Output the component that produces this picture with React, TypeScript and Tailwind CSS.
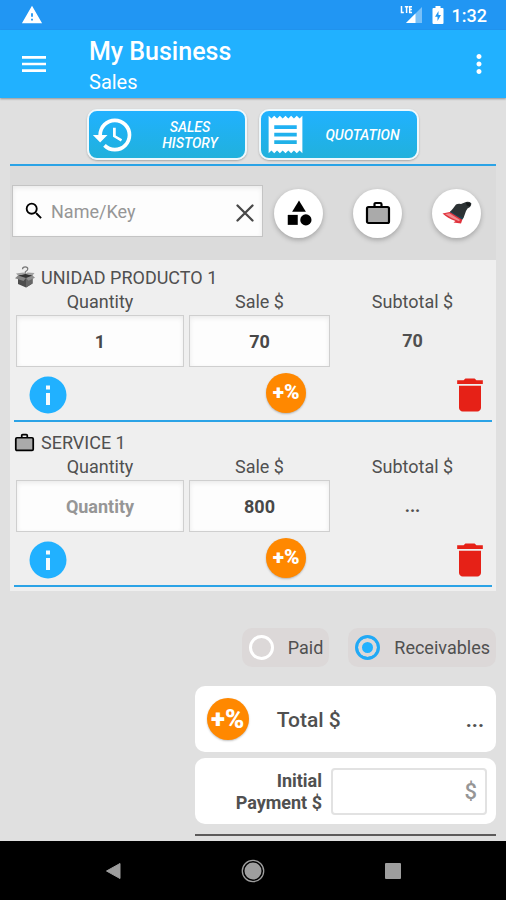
import React, { useState } from "react";
import {
  MdCategory,
  MdDelete,
  MdHistory,
  MdMenu,
  MdMoreVert,
  MdReceipt,
  MdSearch,
  MdWarning,
} from "react-icons/md";

function Briefcase({ className }: { className: string }) {
  return (
    <svg viewBox="0 0 26 24" className={className} aria-hidden="true">
      <rect x="2" y="6" width="22" height="16" rx="1.5" fill="#aaaaaa" stroke="#000" strokeWidth="2.2" />
      <path d="M9.5 6V3.2q0-1.2 1.2-1.2h4.6q1.2 0 1.2 1.2V6" fill="none" stroke="#000" strokeWidth="2.2" />
    </svg>
  );
}

function OpenBox({ className }: { className: string }) {
  return (
    <svg viewBox="0 0 20 22" className={className} aria-hidden="true">
      <path d="M7.500 3.200Q7.600.9 10.200.9T12.800 3Q12.700 4.400 11 5.200Q10 5.800 10 7.500V10" fill="none" stroke="#777" strokeWidth="1.200" />
      <path d="M3 9.500 10 8l7.500 1.500v8L11 21.500 3 18z" fill="#4d4d4d" />
      <path d="m11 12.500 6.500-3v8L11 21.500z" fill="#666" />
      <path d="m3 9.500 7.500-1.700L17.500 9.500 11 12.500z" fill="#333" />
      <path d="M3 9.500 0 12.300 8.500 15 11 12z" fill="#858585" />
      <path d="m17.500 9.500 2.500 2.300-6.500 3L11 12z" fill="#8f8f8f" />
      <path d="M3 9.500 1 7.500l7.500-1L10.500 8zM17.500 9.500 19.500 7l-7-.6-2 1.600z" fill="#a0a0a0" />
    </svg>
  );
}

function Hat({ className }: { className: string }) {
  return (
    <svg viewBox="0 0 30 24" className={className} aria-hidden="true">
      <path d="M8 11 11 7.500 14 3.500Q16 2.500 19 3L24 1Q27.500.4 29.300 2.300 29.500 4.300 28 6L25.500 7.500 24 10 21.500 17 19.500 19z" fill="#2c3234" />
      <path d="m24 1.600 4.800.8-1 2.800-3-.6z" fill="#15191a" />
      <path d="M8.700 10 7.500 12 20 19.300 21 16.500Q14 14.500 8.700 10z" fill="#1f4150" />
      <path d="M.5 12.500 7.800 11 20.300 18.800 19 22.500 11.500 21.500 13.500 20Q5.500 17 .5 12.500z" fill="#e0323c" />
      <path d="M3 13 7.500 12.200 18 19l-1 1.200Q9.500 17.500 3 13z" fill="#f08a8e" />
    </svg>
  );
}

function InfoIcon() {
  return (
    <svg viewBox="0 0 38 38" className="size-[38px]" aria-hidden="true">
      <circle cx="19" cy="19" r="18.500" fill="#21b1ff" />
      <path d="M17 9.500h4v4h-4zM17 17h4v12h-4z" fill="#f4fbff" />
    </svg>
  );
}

function ActionButton({ icon, label }: { icon: React.ReactNode; label: string }) {
  return (
    <button
      type="button"
      className="flex h-[51px] w-40 items-center rounded-[10px] border-2 border-[#eef8fc] bg-linear-to-b from-[#21b1ff] to-[#21b1dc] pl-[2px] text-white shadow-[0_1px_2px_rgba(0,0,0,0.25)]"
    >
      {icon}
      <span className="flex-1 px-3 text-center text-[14px] leading-4 font-medium italic">{label}</span>
    </button>
  );
}

function RoundButton({ label, children }: { label: string; children: React.ReactNode }) {
  return (
    <button
      type="button"
      aria-label={label}
      className="flex size-[49px] items-center justify-center rounded-full bg-white shadow-[0_2px_5px_rgba(0,0,0,0.25)]"
    >
      {children}
    </button>
  );
}

type ItemProps = {
  id: string;
  name: string;
  icon: React.ReactNode;
  quantity: string;
  price: string;
  subtotal: string;
};

const fieldClass =
  "h-[52px] w-full min-w-0 border border-[#cfcfcf] bg-[#fdfdfd] text-center text-[18px] font-bold text-[#484848] shadow-[inset_0_2px_5px_rgba(0,0,0,0.08)] outline-none placeholder:text-[#969696]";

function SaleItem({ id, name, icon, quantity, price, subtotal }: ItemProps) {
  const [qty, setQty] = useState(quantity);
  const [sale, setSale] = useState(price);
  return (
    <li>
      <h2 className="flex h-[30px] items-center gap-1.5 text-[18px]">
        <span className="flex w-[21px] justify-center">{icon}</span>
        {name}
      </h2>
      <div className="grid grid-cols-[168fr_141fr_155fr] gap-x-[5px] gap-y-[3px] px-[2px] text-center text-[18px] leading-5">
        <label htmlFor={id + "-qty"}>Quantity</label>
        <label htmlFor={id + "-sale"}>Sale $</label>
        <span>Subtotal $</span>
        <input id={id + "-qty"} className={fieldClass} placeholder="Quantity" value={qty} onChange={(e) => setQty(e.target.value)} />
        <input id={id + "-sale"} className={fieldClass} value={sale} onChange={(e) => setSale(e.target.value)} />
        <output className="self-center font-bold">{subtotal}</output>
      </div>
      <div className="grid h-[55px] grid-cols-[4fr_40px_3fr] items-center border-b-2 border-[#2ba3e6] pt-[2px] pr-2 pl-[15px]">
        <button type="button" aria-label="Information" className="justify-self-start">
          <InfoIcon />
        </button>
        <button
          type="button"
          className="mb-1 size-10 rounded-full bg-[#ff8800] text-[21px] font-black text-white shadow-[0_1px_2px_rgba(0,0,0,0.25)]"
        >
          +%
        </button>
        <button type="button" aria-label="Delete" className="-mr-2 justify-self-end">
          <MdDelete className="size-11 text-[#e62117]" />
        </button>
      </div>
    </li>
  );
}

function PaymentOption({ label, checked, onSelect }: { label: string; checked: boolean; onSelect: () => void }) {
  return (
    <label className="flex h-[39px] items-center gap-3.5 rounded-[10px] bg-[#dcd8d8] pr-1.5 pl-[7px] text-[18px]">
      <input
        type="radio"
        name="payment"
        checked={checked}
        onChange={onSelect}
        className="size-[25px] appearance-none rounded-full border-[3px] border-white checked:border-[#21a9f5] checked:bg-[#21b1ff] checked:shadow-[inset_0_0_0_4px_#dcd8d8]"
      />
      {label}
    </label>
  );
}

export default function App() {
  const [payment, setPayment] = useState("Receivables");
  return (
    <div className="flex min-h-screen flex-col bg-[#e0e0e0] font-[Roboto,sans-serif] text-[#505050]">
      <div className="flex h-[30px] items-center bg-[#2196f3] pr-[19px] pl-[21px] text-white">
        <MdWarning className="size-[22px]" />
        <div className="ml-auto flex items-center">
          <svg viewBox="0 0 24 20" className="h-5 w-6" aria-hidden="true">
            <path d="M22 2v16H6z" fill="#fff" opacity=".4" />
            <path d="M15.500 8.500V18H6z" fill="#fff" />
            <path d="M1.500 1v6.500h2.300M4.800 1.700h3.600M6.600 1.700v6.400M12 1.700H9.700v5.800H12M9.700 4.600h2.200" fill="none" stroke="#fff" strokeWidth="1.500" />
          </svg>
          <svg viewBox="0 0 12 20" className="mx-2 h-5 w-3" aria-hidden="true">
            <path d="M3.500 1h5v2h2q1 0 1 1v14q0 1-1 1h-9q-1 0-1-1V4q0-1 1-1h2z" fill="#fff" />
            <path d="M6.500 6 3 11.800h2.500V16L9 10H6.500z" fill="#2196f3" />
          </svg>
          <span className="text-[18px] font-medium">1:32</span>
        </div>
      </div>

      <header className="flex h-[68px] items-center bg-[#21b1ff] pr-3 pl-[18px] text-white shadow-[0_1px_2px_rgba(0,0,0,0.35)]">
        <button type="button" aria-label="Menu">
          <MdMenu className="size-8" />
        </button>
        <div className="ml-[39px] flex-1 pt-1">
          <h1 className="text-[25px] leading-8 font-medium">My Business</h1>
          <p className="text-[20px] leading-7">Sales</p>
        </div>
        <button type="button" aria-label="More options">
          <MdMoreVert className="size-[30px]" />
        </button>
      </header>

      <main className="flex-1 px-2.5 pt-[11px] pb-[5px]">
        <div className="flex justify-center gap-3 border-b-2 border-[#2ba3e6] pb-1">
          <ActionButton icon={<MdHistory className="size-11 shrink-0" />} label="SALES HISTORY" />
          <ActionButton icon={<MdReceipt className="size-[45px] shrink-0" />} label="QUOTATION" />
        </div>

        <div className="grid h-[94px] grid-cols-[251fr_233fr] items-center bg-[#dbdbdb] pl-[2px]">
          <div className="mb-1 flex h-[52px] min-w-0 items-center border border-[#c4c4c4] bg-[#fdfdfd] pr-2 pl-2.5 shadow-[inset_0_2px_5px_rgba(0,0,0,0.08)]">
            <MdSearch className="size-[22px] shrink-0 text-black" />
            <input
              aria-label="Name/Key"
              placeholder="Name/Key"
              className="ml-1.5 w-full min-w-0 flex-1 bg-transparent text-[18px] outline-none placeholder:text-[#969696]"
            />
            <button type="button" aria-label="Clear">
              <svg viewBox="0 0 18 18" className="mt-1 size-[18px]" aria-hidden="true">
                <path d="m1.500 1.500 15 15m0-15-15 15" stroke="#484848" strokeWidth="2.300" strokeLinecap="round" />
              </svg>
            </button>
          </div>
          <div className="flex min-w-0 justify-between pr-[15px] pl-[11px]">
            <RoundButton label="Products">
              <MdCategory className="size-[30px] text-black" />
            </RoundButton>
            <RoundButton label="Services">
              <Briefcase className="h-6 w-[26px]" />
            </RoundButton>
            <RoundButton label="Other items">
              <Hat className="h-6 w-[30px]" />
            </RoundButton>
          </div>
        </div>

        <ul className="flex flex-col gap-[5px] bg-[#efefef] px-1 pt-[2px] pb-1">
          <SaleItem id="product" name="UNIDAD PRODUCTO 1" icon={<OpenBox className="h-[22px] w-5" />} quantity="1" price="70" subtotal="70" />
          <SaleItem id="service" name="SERVICE 1" icon={<Briefcase className="h-[19px] w-[21px]" />} quantity="" price="800" subtotal="..." />
        </ul>

        <div className="mt-[37px] flex justify-end gap-[19px]">
          {["Paid", "Receivables"].map((label) => (
            <PaymentOption key={label} label={label} checked={payment === label} onSelect={() => setPayment(label)} />
          ))}
        </div>

        <div className="mt-[19px] ml-auto w-[62%] border-b-2 border-[#5c5a5a] pb-2.5">
          <div className="flex h-[66px] items-center rounded-[10px] bg-white px-3">
            <button
              type="button"
              className="size-[42px] rounded-full bg-[#ff8800] text-[26px] font-black text-white shadow-[0_1px_2px_rgba(0,0,0,0.25)]"
            >
              +%
            </button>
            <span className="ml-7 flex-1 pt-[3px] text-[21px] font-medium">Total $</span>
            <output className="pt-[3px] text-[21px] font-bold">...</output>
          </div>
          <div className="mt-1.5 flex h-[66px] items-center justify-end gap-[9px] rounded-[10px] bg-white pr-[9px]">
            <label htmlFor="initial-payment" className="w-24 pt-[2px] text-right text-[18px] leading-[22px] font-bold">
              Initial Payment $
            </label>
            <input
              id="initial-payment"
              placeholder="$"
              className="h-[47px] w-[156px] rounded-[4px] border-2 border-[#e2e2e2] bg-white px-2 text-right text-[22px] font-medium outline-none placeholder:text-[#969696]"
            />
          </div>
        </div>
      </main>

      <nav className="grid h-[59px] grid-cols-3 items-center bg-black px-[43px] text-[#9e9e9e]">
        <button type="button" aria-label="Back" className="justify-self-center">
          <svg viewBox="0 0 16 18" className="h-[18px] w-4" aria-hidden="true">
            <path d="M15 1.500v15L1.500 9z" fill="currentColor" stroke="currentColor" strokeLinejoin="round" />
          </svg>
        </button>
        <button type="button" aria-label="Home" className="justify-self-center">
          <svg viewBox="0 0 24 24" className="size-6" aria-hidden="true">
            <circle cx="12" cy="12" r="10.700" fill="none" stroke="currentColor" strokeWidth="1.300" />
            <circle cx="12" cy="12" r="8.500" fill="currentColor" />
          </svg>
        </button>
        <button type="button" aria-label="Recent apps" className="size-4 justify-self-center rounded-[1px] bg-[#9e9e9e]" />
      </nav>
    </div>
  );
}
